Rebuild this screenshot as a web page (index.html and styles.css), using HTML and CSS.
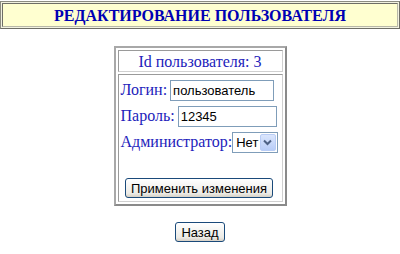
FILE: index.html
```html
<!DOCTYPE html>
<html lang="ru">
<head>
    <meta charset="UTF-8">
    <title>Редактирование пользователя</title>
    <link rel="stylesheet" href="styles.css">
</head>
<body>
    <div class="header">
        <div class="header-cell">РЕДАКТИРОВАНИЕ ПОЛЬЗОВАТЕЛЯ</div>
    </div>

    <form class="edit-form">
        <div class="box">
            <div class="cell cell-title">Id пользователя: 3</div>
            <div class="cell cell-fields">
                <div class="row">
                    <label for="login">Логин:</label>
                    <input type="text" id="login" class="field field-login" value="пользователь">
                </div>
                <div class="row">
                    <label for="password">Пароль:</label>
                    <input type="text" id="password" class="field field-pass" value="12345">
                </div>
                <div class="row">
                    <label for="admin">Администратор:</label>
                    <div class="select">
                        <span class="select-value">Нет</span>
                        <span class="select-arrow">
                            <svg width="9" height="7" viewBox="0 0 9 7"><path d="M1 1.5 L4.5 5 L8 1.5" fill="none" stroke="#4d6185" stroke-width="2"/></svg>
                        </span>
                    </div>
                </div>
                <div class="submit-row">
                    <button type="button" class="btn">Применить изменения</button>
                </div>
            </div>
        </div>
    </form>

    <div class="back-row">
        <button type="button" class="btn">Назад</button>
    </div>
</body>
</html>
```

FILE: styles.css
```css
* {
    box-sizing: border-box;
}

body {
    margin: 0;
    padding-top: 1px;
    background-color: white;
    font-family: "Times New Roman", "Liberation Serif", "DejaVu Serif", serif;
}

.header {
    border: 1px solid #8c8c80;
    border-right-color: #6e6e66;
    border-bottom-color: #6e6e66;
    background-color: #f2f2e0;
    padding: 1px;
}

.header-cell {
    border: 1px solid #6e6e66;
    border-right-color: #b8b8a8;
    border-bottom-color: #b8b8a8;
    background-color: #ffffd0;
    height: 24px;
    line-height: 23px;
    text-align: center;
    font-family: "Liberation Serif", serif;
    font-weight: bold;
    font-size: 16px;
    color: #0000b4;
}

.edit-form {
    display: flex;
    justify-content: center;
    margin-top: 17px;
}

.box {
    width: 173px;
    border: 2px solid #8a8a8a;
    border-top-color: #a8a8a8;
    border-left-color: #a8a8a8;
    padding: 2px;
    display: flex;
    flex-direction: column;
    gap: 2px;
}

.cell {
    border: 1px solid #9a9a9a;
    border-right-color: #d0d0d0;
    border-bottom-color: #d0d0d0;
}

.cell-title {
    height: 22px;
    line-height: 21px;
    text-align: center;
    font-size: 16px;
    color: #2222bb;
}

.cell-fields {
    padding: 2px 4px 3px 2px;
}

.row {
    display: flex;
    align-items: center;
    height: 26px;
    color: #2222bb;
    font-size: 16px;
}

.row label {
    margin-right: 3px;
}

.field {
    height: 21px;
    border: 1px solid #7f9db9;
    padding: 1px 2px;
    font-family: "Liberation Sans", Arial, sans-serif;
    font-size: 13px;
    color: black;
}

.field-login {
    width: 104px;
}

.field-pass {
    width: 99px;
}

.select {
    display: flex;
    align-items: center;
    width: 48px;
    height: 21px;
    border: 1px solid #7f9db9;
    margin-left: -3px;
    font-family: "Liberation Sans", Arial, sans-serif;
    font-size: 13px;
    color: black;
    padding: 1px;
}

.select-value {
    flex: 1;
    padding-left: 2px;
}

.select-arrow {
    width: 16px;
    height: 17px;
    display: flex;
    align-items: center;
    justify-content: center;
    border: 1px solid #b9cdf6;
    border-radius: 2px;
    background: linear-gradient(#dbe6fd, #b8cdf8);
}

.submit-row {
    display: flex;
    justify-content: center;
    margin-top: 23px;
}

.btn {
    height: 20px;
    padding: 0 5px;
    margin: 0;
    border: 1px solid #1a4a7a;
    border-radius: 3px;
    background: linear-gradient(#ffffff, #ecebe6 80%, #d6d0c5);
    font-family: "Liberation Sans", Arial, sans-serif;
    font-size: 13px;
    color: black;
    line-height: 17px;
}

.back-row {
    display: flex;
    justify-content: center;
    margin-top: 16px;
}
```
